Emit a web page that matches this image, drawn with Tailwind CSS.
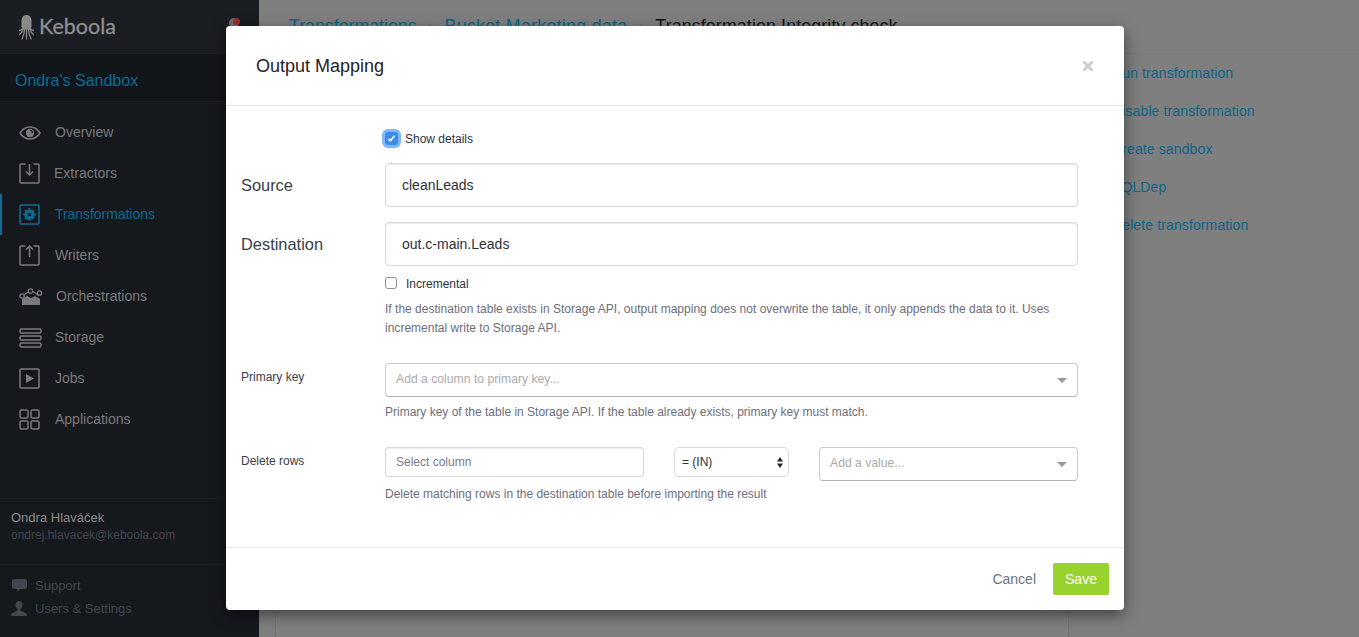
<!DOCTYPE html>
<html>
<head>
<meta charset="utf-8">
<script src="https://cdn.jsdelivr.net/npm/@tailwindcss/browser@4"></script>
</head>
<body class="m-0 overflow-hidden bg-[#7f7f7f] font-['Liberation_Sans',Arial,sans-serif]">
<div class="relative flex h-[637px] w-[1359px] overflow-hidden">
  <!-- Sidebar -->
  <aside class="flex h-full w-[259px] shrink-0 flex-col bg-[#15181d] text-[14px] text-[#7a7a7a]">
    <div class="relative flex h-[53px] items-center bg-[#1a1d22] pl-[19px]">
      <svg width="15" height="25" viewBox="0 0 15 25" fill="#8a8a8a" class="mt-[1px]"><path d="M2.500 6c0-4 2-6 5-6s5 2 5 6v5c0 1.500-.8 2.500-1.800 3.500H4.300C3.300 13.500 2.500 12.500 2.500 11z"/><path d="M7.500 14.500V24M5.500 14.500C5.500 18 4.500 21 3 24M9.500 14.500c0 3.500 1 6.500 2.500 9.500M4 14c-.5 2-1.500 4-3.500 5.500M11 14c.5 2 1.500 4 3.500 5.500M3.500 13.500C2.500 15 1.500 15.500 0 15.500M11.500 13.500c1 1.500 2 2 3.500 2" stroke="#8a8a8a" stroke-width="1.300" fill="none" stroke-linecap="round"/></svg>
      <span class="ml-[5px] font-['Lato',sans-serif] text-[21.5px] leading-none text-[#8f8f8f] [-webkit-text-stroke:0.3px_#8f8f8f]">Keboola</span>
      <span class="absolute left-[229px] top-[18px] h-[10px] w-[10px] rounded-full bg-[#6e6e6e]"></span>
      <span class="absolute left-[233px] top-[18px] h-[7px] w-[7px] rounded-full bg-[#9a2c2c]"></span>
    </div>
    <div class="flex h-[49px] items-center border-y border-[#1c1f25] bg-[#12151a] pl-[15px] pt-[7px] text-[16px] text-[#0d6c93]">Ondra's Sandbox</div>
    <nav class="flex flex-col pt-[10px]">
      <a class="flex h-[41px] items-center pl-[19px]"><svg width="22" height="14" viewBox="0 0 22 14" fill="none" stroke="#7a7a7a" stroke-width="1.500"><path d="M1 7c2.500-4 6-6 10-6s7.500 2 10 6c-2.500 4-6 6-10 6S3.500 11 1 7z"/><circle cx="11" cy="7" r="4.200" fill="#7a7a7a" stroke="none"/><path d="M11 4.500a2.500 2.500 0 0 1 2.500 2.500" stroke="#15181d" stroke-width="1.200"/></svg><span class="ml-[14px]">Overview</span></a>
      <a class="flex h-[41px] items-center pl-[19px]"><svg width="21" height="21" viewBox="0 0 21 21" fill="none" stroke="#7a7a7a" stroke-width="1.500"><path d="M6.500 1H2a1 1 0 0 0-1 1v17a1 1 0 0 0 1 1h17a1 1 0 0 0 1-1V2a1 1 0 0 0-1-1h-4.500"/><path d="M10.500 1v10.500M7 8.500l3.500 3.500L14 8.500"/></svg><span class="ml-[14px]">Extractors</span></a>
      <a class="relative flex h-[41px] items-center pl-[19px] text-[#0d6c93]"><span class="absolute left-0 top-0 h-full w-[2px] bg-[#0d6c93]"></span><svg width="21" height="21" viewBox="0 0 21 21" fill="none"><rect x="1" y="1" width="19" height="19" rx="1" stroke="#0d6c93" stroke-width="1.500"/><circle cx="10.500" cy="10.500" r="4" stroke="#0d6c93" stroke-width="2.500"/><path d="M10.500 4v13M4 10.500h13M6 6l9 9M15 6l-9 9" stroke="#0d6c93" stroke-width="1.600"/><circle cx="10.500" cy="10.500" r="1.600" fill="#15181d"/></svg><span class="ml-[15px] text-[13.9px]">Transformations</span></a>
      <a class="flex h-[41px] items-center pl-[19px]"><svg width="21" height="21" viewBox="0 0 21 21" fill="none" stroke="#7a7a7a" stroke-width="1.500"><path d="M6.500 1H2a1 1 0 0 0-1 1v17a1 1 0 0 0 1 1h17a1 1 0 0 0 1-1V2a1 1 0 0 0-1-1h-4.500"/><path d="M10.500 12V1M7 4.500L10.500 1 14 4.500"/></svg><span class="ml-[15px]">Writers</span></a>
      <a class="flex h-[41px] items-center pl-[19px]"><svg width="24" height="19" viewBox="0 0 24 19" fill="none"><path d="M3 18v-6l5-3 4 2 4-2 5 3v6z" fill="#7a7a7a"/><path d="M3 9l6-4 6 0 5 4" stroke="#7a7a7a" stroke-width="1.200"/><circle cx="3" cy="9" r="2.200" fill="#15181d" stroke="#7a7a7a" stroke-width="1.300"/><circle cx="11.500" cy="4" r="2.200" fill="#15181d" stroke="#7a7a7a" stroke-width="1.300"/><circle cx="20.500" cy="6" r="2.200" fill="#15181d" stroke="#7a7a7a" stroke-width="1.300"/></svg><span class="ml-[13px]">Orchestrations</span></a>
      <a class="flex h-[41px] items-center pl-[19px]"><svg width="23" height="20" viewBox="0 0 23 20" fill="none" stroke="#7a7a7a" stroke-width="1.500"><rect x="1" y="1" width="21" height="4" rx="1.500"/><rect x="1" y="8" width="21" height="4" rx="1.500"/><rect x="1" y="15" width="21" height="4" rx="1.500"/></svg><span class="ml-[13px]">Storage</span></a>
      <a class="flex h-[41px] items-center pl-[19px]"><svg width="21" height="21" viewBox="0 0 21 21" fill="none"><rect x="1" y="1" width="19" height="19" rx="1" stroke="#7a7a7a" stroke-width="1.500"/><path d="M7 6l8 4.500L7 15z" fill="#7a7a7a"/></svg><span class="ml-[15px]">Jobs</span></a>
      <a class="flex h-[41px] items-center pl-[19px]"><svg width="21" height="21" viewBox="0 0 21 21" fill="none" stroke="#7a7a7a" stroke-width="1.500"><rect x="1" y="1" width="8" height="8" rx="1.500"/><rect x="12" y="1" width="8" height="8" rx="1.500"/><rect x="1" y="12" width="8" height="8" rx="1.500"/><rect x="12" y="12" width="8" height="8" rx="1.500"/></svg><span class="ml-[15px]">Applications</span></a>
    </nav>
    <div class="mt-[58px] h-[67px] border-y border-[#1c1f25] pl-[11px] pt-[10px]">
      <div class="text-[13px] leading-[18px] text-[#8a8a8a]">Ondra Hlaváček</div>
      <div class="text-[12px] leading-[17px] text-[#41464f]">ondrej.hlavacek@keboola.com</div>
    </div>
    <div class="flex flex-col pl-[11px] pt-[9px] text-[13px] leading-[23px] text-[#41464f]">
      <a class="flex items-center"><svg width="15" height="13" viewBox="0 0 15 13" fill="#41464f" class="ml-[1px]"><path d="M2 0h11a2 2 0 0 1 2 2v6a2 2 0 0 1-2 2H8l-2.500 2.500V10H2a2 2 0 0 1-2-2V2a2 2 0 0 1 2-2z"/></svg><span class="ml-[8px]">Support</span></a>
      <a class="flex items-center"><svg width="16" height="15" viewBox="0 0 16 15" fill="#41464f"><path d="M8 0c2.200 0 3.500 1.500 3.500 3.800 0 2-1 3.600-2 4.200v1.500l5 2.500c.8.400 1.500 1 1.500 3H0c0-2 .7-2.600 1.500-3l5-2.500V8c-1-.6-2-2.200-2-4.200C4.500 1.500 5.800 0 8 0z"/></svg><span class="ml-[8px]">Users &amp; Settings</span></a>
    </div>
  </aside>

  <!-- Dimmed page -->
  <main class="relative min-w-0 flex-1 bg-[#7f7f7f]">
    <div class="flex h-[54px] items-center border-b border-[#7d7a6e] pl-[30px] text-[17.75px]">
      <span class="text-[#0c6589]">Transformations</span><span class="ml-[11px] text-[#6f6f6f]">›</span>
      <span class="ml-[11px] tracking-[0.3px] text-[#0c6589]">Bucket Marketing data</span><span class="ml-[11px] text-[#6f6f6f]">›</span>
      <span class="ml-[11px] tracking-[0.14px] text-[#141414]">Transformation Integrity check</span>
    </div>
    <div class="flex">
      <div class="ml-[16px] mt-[299px] h-[300px] w-[794px] border-x border-[#767676]"></div>
      <div class="ml-[43px] flex flex-col pt-[9px] text-[14px] leading-[20px] tracking-[0.12px] text-[#0c6589]">
        <a class="mb-[18px]">Run transformation</a>
        <a class="mb-[18px]">Disable transformation</a>
        <a class="mb-[18px]">Create sandbox</a>
        <a class="mb-[18px]">SQLDep</a>
        <a>Delete transformation</a>
      </div>
    </div>
  </main>

  <!-- Modal -->
  <section class="absolute left-[226px] top-[26px] flex h-[584px] w-[898px] flex-col rounded-[4px] bg-white shadow-[0_5px_15px_rgba(0,0,0,0.5)]">
    <header class="flex h-[80px] shrink-0 items-center justify-between border-b border-[#e8e8e8] pl-[30px] pr-[30px]">
      <h2 class="pt-[1px] text-[18px] font-normal text-[#1f2229]">Output Mapping</h2>
      <svg width="12" height="12" viewBox="0 0 12 12" stroke="#cfcfcf" stroke-width="3"><path d="M1.500 1.500l9 9M10.500 1.500l-9 9"/></svg>
    </header>
    <div class="grid grid-cols-[144px_693px] pl-[15px] pt-[22px] text-[#333740]">
      <div></div>
      <label class="flex h-[20px] items-center text-[12px] text-[#2f3340]">
        <span class="flex h-[13px] w-[13px] items-center justify-center rounded-[3px] bg-[#3b8bec] ring-[3px] ring-[#7fb8fb]"><svg width="9" height="9" viewBox="0 0 9 9" fill="none" stroke="white" stroke-width="1.700"><path d="M1.500 4.800l2 2 4-5"/></svg></span>
        <span class="ml-[7px] pt-[1px]">Show details</span>
      </label>

      <div class="mt-[15px] flex h-[44px] items-center pt-[1px] text-[16.4px] text-[#3a3e49]">Source</div>
      <div class="mt-[15px] flex h-[44px] items-center rounded-[4px] border border-[#d6d6de] pl-[16px] text-[14px] text-[#2c303a] shadow-[inset_0_1px_1px_rgba(0,0,0,0.075)]">cleanLeads</div>

      <div class="mt-[15px] flex h-[44px] items-center pt-[1px] text-[16.4px] text-[#3a3e49]">Destination</div>
      <div class="mt-[15px] flex h-[44px] items-center rounded-[4px] border border-[#d6d6de] pl-[16px] text-[14px] text-[#2c303a] shadow-[inset_0_1px_1px_rgba(0,0,0,0.075)]">out.c-main.Leads</div>

      <div></div>
      <label class="mt-[7px] flex h-[20px] items-center text-[12px] text-[#2f3340]">
        <span class="h-[12px] w-[12px] rounded-[3px] border border-[#8e8e8e] bg-white"></span>
        <span class="ml-[9px] pt-[1px]">Incremental</span>
      </label>

      <div></div>
      <p class="mt-[7px] text-[12px] leading-[19px] tracking-[0.015px] text-[#6d6e7c]">If the destination table exists in Storage API, output mapping does not overwrite the table, it only appends the data to it. Uses incremental write to Storage API.</p>

      <div class="mt-[25px] pt-[5px] text-[12px] leading-[18px] text-[#3a3e49]">Primary key</div>
      <div class="mt-[25px] flex h-[34px] items-center justify-between rounded-[4px] border border-[#ccc] border-b-[#b3b3b3] px-[10px] text-[12.2px] text-[#aaa]">
        <span class="pb-[1px]">Add a column to primary key...</span>
        <span class="h-0 w-0 border-x-[5px] border-t-[5px] border-x-transparent border-t-[#999]"></span>
      </div>

      <div></div>
      <p class="mt-[6px] text-[12px] leading-[19px] text-[#6d6e7c]">Primary key of the table in Storage API. If the table already exists, primary key must match.</p>

      <div class="mt-[25px] pt-[5px] text-[12px] leading-[18px] text-[#3a3e49]">Delete rows</div>
      <div class="mt-[25px] flex items-start">
        <div class="flex h-[30px] w-[259px] items-center rounded-[3px] border border-[#d6d6de] pl-[10px] text-[12px] text-[#7b7b85] shadow-[inset_0_1px_1px_rgba(0,0,0,0.075)]">Select column</div>
        <div class="ml-[30px] flex h-[30px] w-[115px] items-center justify-between rounded-[5px] border border-[#d6d6de] pl-[7px] pr-[5px] text-[12px] text-[#2c303a]">
          <span>= (IN)</span>
          <svg width="6" height="11" viewBox="0 0 6 11" fill="#222"><path d="M3 0l3 4.500H0zM3 11L0 6.500h6z"/></svg>
        </div>
        <div class="ml-[30px] flex h-[34px] w-[259px] items-center justify-between rounded-[4px] border border-[#ccc] border-b-[#b3b3b3] px-[10px] text-[12.2px] text-[#aaa]">
          <span class="pb-[1px]">Add a value...</span>
          <span class="h-0 w-0 border-x-[5px] border-t-[5px] border-x-transparent border-t-[#999]"></span>
        </div>
      </div>

      <div></div>
      <p class="mt-[4px] text-[12px] leading-[19px] text-[#6d6e7c]">Delete matching rows in the destination table before importing the result</p>
    </div>
    <footer class="mt-auto flex h-[63px] items-center justify-end border-t border-[#e8e8e8] pr-[15px]">
      <span class="text-[14px] text-[#6d7385]">Cancel</span>
      <span class="ml-[17px] flex h-[32px] w-[56px] items-center justify-center rounded-[2px] bg-[#98d22e] text-[14px] text-white">Save</span>
    </footer>
  </section>
</div>
</body>
</html>
